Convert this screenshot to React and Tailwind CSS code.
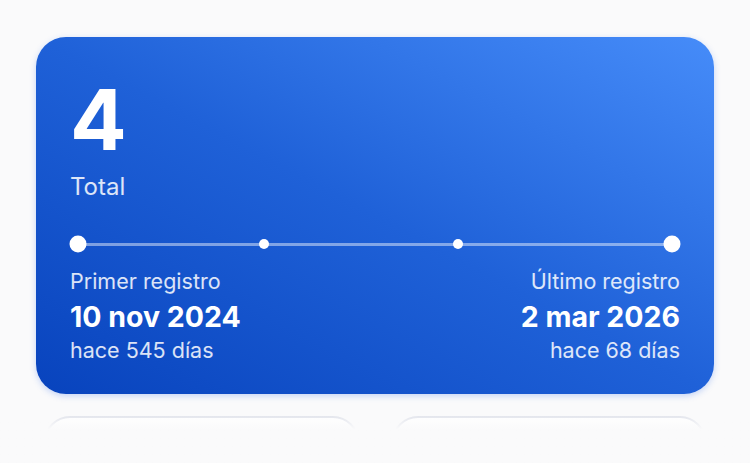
import React from "react";

const stats = {
  total: 4,
  first: { label: "Primer registro", date: "10 nov 2024", ago: "hace 545 días" },
  last: { label: "Último registro", date: "2 mar 2026", ago: "hace 68 días" },
  // relative position of each record on the timeline
  points: [0, 31.3, 64, 100],
};

export default function App() {
  return (
    <div
      className="relative h-[463px] w-[750px] overflow-hidden bg-[#fafafb]"
      style={{ fontFamily: "Inter, 'Noto Sans', sans-serif" }}
    >
      <div className="px-[36px] pt-[37px]">
        {/* Summary card */}
        <div className="h-[357px] rounded-[30px] bg-linear-to-tr from-[#0843bd] via-[#1f61d8] to-[#468cf9] px-[34px] pt-[41px] text-white shadow-[0_2px_6px_rgba(37,99,235,0.25)]">
          <div className="text-[84px] font-bold leading-[1] tracking-tight">{stats.total}</div>
          <div className="mt-[10px] text-[24px] leading-[30px] text-white/85">Total</div>

          {/* Timeline */}
          <div className="relative mt-[34px] h-[16px]">
            <div className="absolute left-[8px] right-[8px] top-[7px] h-[3px] rounded-full bg-white/45" />
            {stats.points.map((p, i) => {
              const big = i === 0 || i === stats.points.length - 1;
              return (
                <div
                  key={i}
                  className="absolute top-1/2 -translate-x-1/2 -translate-y-1/2 rounded-full bg-white"
                  style={{
                    left: `calc(8px + (100% - 16px) * ${p / 100})`,
                    width: big ? 17 : 10,
                    height: big ? 17 : 10,
                  }}
                />
              );
            })}
          </div>

          <div className="mt-[15px] flex justify-between">
            <div>
              <div className="text-[21.5px] leading-[28px] text-white/85">{stats.first.label}</div>
              <div className="mt-[5px] text-[28.5px] font-[650] leading-[34px]">{stats.first.date}</div>
              <div className="mt-[2px] text-[21.5px] leading-[28px] text-white/85">{stats.first.ago}</div>
            </div>
            <div className="text-right">
              <div className="text-[21.5px] leading-[28px] text-white/85">{stats.last.label}</div>
              <div className="mt-[5px] text-[28.5px] font-[650] leading-[34px]">{stats.last.date}</div>
              <div className="mt-[2px] text-[21.5px] leading-[28px] text-white/85">{stats.last.ago}</div>
            </div>
          </div>
        </div>

        {/* Next cards, faded out below */}
        <div className="mt-[22px] grid grid-cols-2 gap-[33px] px-[8px]">
          <div className="h-[120px] rounded-[26px] border-2 border-[#e2e4ec] bg-white" />
          <div className="h-[120px] rounded-[26px] border-2 border-[#e2e4ec] bg-white" />
        </div>
      </div>

      <div className="pointer-events-none absolute bottom-0 left-0 right-0 h-[48px] bg-linear-to-b from-[#fafafb]/0 to-[#fafafb] to-[30%]" />
    </div>
  );
}
